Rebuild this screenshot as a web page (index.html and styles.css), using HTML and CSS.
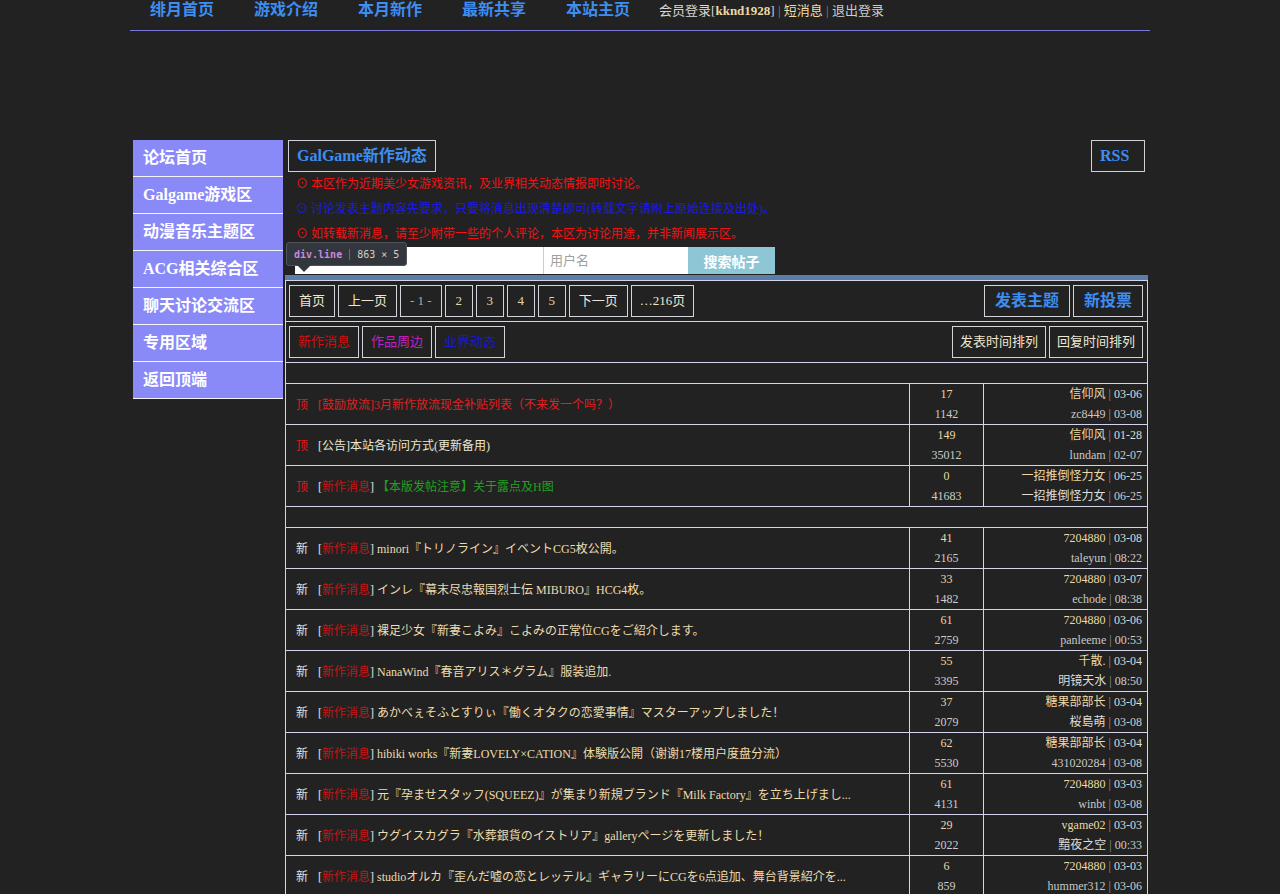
FILE: index.html
```html
<!DOCTYPE html>
<html lang="zh">
<head>
<meta charset="utf-8">
<title>GalGame新作动态</title>
<link rel="stylesheet" href="styles.css">
</head>
<body>
<div class="page">
  <div class="topnav">
    <a class="navlink">绯月首页</a>
    <a class="navlink">游戏介绍</a>
    <a class="navlink">本月新作</a>
    <a class="navlink">最新共享</a>
    <a class="navlink">本站主页</a>
    <span class="userinfo">会员登录[<b class="uname">kknd1928</b>] <span class="sep">|</span> <a class="pm">短消息</a> <span class="sep">|</span> <a class="logout">退出登录</a></span>
  </div>
  <div class="ad"></div>
  <div class="layout">
    <ul class="sidebar">
      <li>论坛首页</li>
      <li>Galgame游戏区</li>
      <li>动漫音乐主题区</li>
      <li>ACG相关综合区</li>
      <li>聊天讨论交流区</li>
      <li>专用区域</li>
      <li>返回顶端</li>
    </ul>
    <div class="main">
      <div class="board-head">
        <div class="board-title">GalGame新作动态</div>
        <div class="rss">RSS</div>
      </div>
      <div class="rules">
        <div class="rule red">⊙ 本区作为近期美少女游戏资讯，及业界相关动态情报即时讨论。</div>
        <div class="rule blue">⊙ 讨论发表主题内容先要求，只要将消息出现清楚即可(转载文字请附上原始连接及出处)。</div>
        <div class="rule red">⊙ 如转载新消息，请至少附带一些的个人评论，本区为讨论用途，并非新闻展示区。</div>
      </div>
      <div class="search">
        <input class="kw" type="text">
        <input class="user" type="text" placeholder="用户名">
        <button class="sbtn">搜索帖子</button>
      </div>
      <div class="line"></div>
      <div class="devtip"><span class="tag">div.line</span><span class="dim">863 × 5</span></div>

      <table class="threads">
        <colgroup><col class="c1"><col class="c2"><col class="c3"></colgroup>
        <tr class="bar">
          <td colspan="3">
            <div class="barrow">
              <div class="group">
                <a class="btn">首页</a><a class="btn">上一页</a><a class="btn cur">- 1 -</a><a class="btn num">2</a><a class="btn num">3</a><a class="btn num">4</a><a class="btn num">5</a><a class="btn">下一页</a><a class="btn last">…216页</a>
              </div>
              <div class="group">
                <a class="btn big">发表主题</a><a class="btn big">新投票</a>
              </div>
            </div>
          </td>
        </tr>
        <tr class="bar">
          <td colspan="3">
            <div class="barrow">
              <div class="group">
                <a class="btn cat red">新作消息</a><a class="btn cat magenta">作品周边</a><a class="btn cat blue">业界动态</a>
              </div>
              <div class="group">
                <a class="btn sort">发表时间排列</a><a class="btn sort">回复时间排列</a>
              </div>
            </div>
          </td>
        </tr>
        <tr class="spacer"><td colspan="3"></td></tr>

        <tr class="topic">
          <td class="t-title"><span class="mark top">顶</span><a class="tt hot">[鼓励放流]3月新作放流现金补贴列表（不来发一个吗？）</a></td>
          <td class="t-num"><div class="n1">17</div><div class="n2">1142</div></td>
          <td class="t-last"><div class="l1"><a>信仰风</a> <span class="sep">|</span> 03-06</div><div class="l2"><a>zc8449</a> <span class="sep">|</span> 03-08</div></td>
        </tr>
        <tr class="topic">
          <td class="t-title"><span class="mark top">顶</span><a class="tt white">[公告]本站各访问方式(更新备用)</a></td>
          <td class="t-num"><div class="n1">149</div><div class="n2">35012</div></td>
          <td class="t-last"><div class="l1"><a>信仰风</a> <span class="sep">|</span> 01-28</div><div class="l2"><a>lundam</a> <span class="sep">|</span> 02-07</div></td>
        </tr>
        <tr class="topic">
          <td class="t-title"><span class="mark top">顶</span><span class="br">[</span><a class="catlink">新作消息</a><span class="br">]</span> <a class="tt green">【本版发帖注意】关于露点及H图</a></td>
          <td class="t-num"><div class="n1">0</div><div class="n2">41683</div></td>
          <td class="t-last"><div class="l1"><a>一招推倒怪力女</a> <span class="sep">|</span> 06-25</div><div class="l2"><a class="w">一招推倒怪力女</a> <span class="sep">|</span> 06-25</div></td>
        </tr>
        <tr class="spacer"><td colspan="3"></td></tr>

        <tr class="topic">
          <td class="t-title"><span class="mark">新</span><span class="br">[</span><a class="catlink">新作消息</a><span class="br">]</span> <a class="tt">minori『トリノライン』イベントCG5枚公開。</a></td>
          <td class="t-num"><div class="n1">41</div><div class="n2">2165</div></td>
          <td class="t-last"><div class="l1"><a>7204880</a> <span class="sep">|</span> 03-08</div><div class="l2"><a>taleyun</a> <span class="sep">|</span> 08:22</div></td>
        </tr>
        <tr class="topic">
          <td class="t-title"><span class="mark">新</span><span class="br">[</span><a class="catlink">新作消息</a><span class="br">]</span> <a class="tt">インレ『幕末尽忠報国烈士伝 MIBURO』HCG4枚。</a></td>
          <td class="t-num"><div class="n1">33</div><div class="n2">1482</div></td>
          <td class="t-last"><div class="l1"><a>7204880</a> <span class="sep">|</span> 03-07</div><div class="l2"><a>echode</a> <span class="sep">|</span> 08:38</div></td>
        </tr>
        <tr class="topic">
          <td class="t-title"><span class="mark">新</span><span class="br">[</span><a class="catlink">新作消息</a><span class="br">]</span> <a class="tt">裸足少女『新妻こよみ』こよみの正常位CGをご紹介します。</a></td>
          <td class="t-num"><div class="n1">61</div><div class="n2">2759</div></td>
          <td class="t-last"><div class="l1"><a>7204880</a> <span class="sep">|</span> 03-06</div><div class="l2"><a>panleeme</a> <span class="sep">|</span> 00:53</div></td>
        </tr>
        <tr class="topic">
          <td class="t-title"><span class="mark">新</span><span class="br">[</span><a class="catlink">新作消息</a><span class="br">]</span> <a class="tt">NanaWind『春音アリス＊グラム』服装追加.</a></td>
          <td class="t-num"><div class="n1">55</div><div class="n2">3395</div></td>
          <td class="t-last"><div class="l1"><a>千散.</a> <span class="sep">|</span> 03-04</div><div class="l2"><a class="w">明镜天水</a> <span class="sep">|</span> 08:50</div></td>
        </tr>
        <tr class="topic">
          <td class="t-title"><span class="mark">新</span><span class="br">[</span><a class="catlink">新作消息</a><span class="br">]</span> <a class="tt">あかべぇそふとすりぃ『働くオタクの恋愛事情』マスターアップしました！</a></td>
          <td class="t-num"><div class="n1">37</div><div class="n2">2079</div></td>
          <td class="t-last"><div class="l1"><a>糖果部部长</a> <span class="sep">|</span> 03-04</div><div class="l2"><a class="w">桜島萌</a> <span class="sep">|</span> 03-08</div></td>
        </tr>
        <tr class="topic">
          <td class="t-title"><span class="mark">新</span><span class="br">[</span><a class="catlink">新作消息</a><span class="br">]</span> <a class="tt">hibiki works『新妻LOVELY×CATION』体験版公開（谢谢17楼用户度盘分流）</a></td>
          <td class="t-num"><div class="n1">62</div><div class="n2">5530</div></td>
          <td class="t-last"><div class="l1"><a>糖果部部长</a> <span class="sep">|</span> 03-04</div><div class="l2"><a>431020284</a> <span class="sep">|</span> 03-08</div></td>
        </tr>
        <tr class="topic">
          <td class="t-title"><span class="mark">新</span><span class="br">[</span><a class="catlink">新作消息</a><span class="br">]</span> <a class="tt">元『孕ませスタッフ(SQUEEZ)』が集まり新規ブランド『Milk Factory』を立ち上げまし...</a></td>
          <td class="t-num"><div class="n1">61</div><div class="n2">4131</div></td>
          <td class="t-last"><div class="l1"><a>7204880</a> <span class="sep">|</span> 03-03</div><div class="l2"><a>winbt</a> <span class="sep">|</span> 03-08</div></td>
        </tr>
        <tr class="topic">
          <td class="t-title"><span class="mark">新</span><span class="br">[</span><a class="catlink">新作消息</a><span class="br">]</span> <a class="tt">ウグイスカグラ『水葬銀貨のイストリア』galleryページを更新しました！</a></td>
          <td class="t-num"><div class="n1">29</div><div class="n2">2022</div></td>
          <td class="t-last"><div class="l1"><a>vgame02</a> <span class="sep">|</span> 03-03</div><div class="l2"><a class="w">黯夜之空</a> <span class="sep">|</span> 00:33</div></td>
        </tr>
        <tr class="topic">
          <td class="t-title"><span class="mark">新</span><span class="br">[</span><a class="catlink">新作消息</a><span class="br">]</span> <a class="tt">studioオルカ『歪んだ嘘の恋とレッテル』ギャラリーにCGを6点追加、舞台背景紹介を...</a></td>
          <td class="t-num"><div class="n1">6</div><div class="n2">859</div></td>
          <td class="t-last"><div class="l1"><a>7204880</a> <span class="sep">|</span> 03-03</div><div class="l2"><a>hummer312</a> <span class="sep">|</span> 03-06</div></td>
        </tr>
      </table>
    </div>
  </div>
</div>
</body>
</html>
```

FILE: styles.css
```css
* { box-sizing: border-box; }
html, body {
  margin: 0;
  padding: 0;
  background: #222222;
}
body {
  font-family: "Liberation Serif", "Noto Sans CJK SC", serif;
  font-size: 12px;
  color: #dddddd;
}
a { text-decoration: none; }

.page {
  width: 1020px;
  margin: 0 auto;
}

/* top nav */
.topnav {
  height: 31px;
  display: flex;
  align-items: baseline;
  padding-left: 20px;
  border-bottom: 1px solid #7a78d8;
}
.navlink {
  font-size: 16px;
  font-weight: bold;
  line-height: 20px;
  color: #3d8ef0;
  margin-right: 40px;
}
.navlink:nth-child(5) { margin-right: 29px; }
.userinfo {
  font-size: 13px;
  line-height: 18px;
  color: #d8d8d8;
}
.uname { color: #ecd8a4; }
.userinfo .sep { color: #888; }
.pm { color: #f0dca4; }
.logout { color: #cccccc; }

.ad { height: 109px; }

/* layout */
.layout {
  display: flex;
  gap: 2px;
  padding-left: 3px;
}
.sidebar {
  list-style: none;
  margin: 0;
  padding: 0;
  width: 150px;
  flex: none;
  align-self: flex-start;
}
.sidebar li {
  height: 37px;
  line-height: 36px;
  background: #8989f7;
  border-bottom: 1px solid #f4f4ff;
  color: #ffffff;
  font-size: 16px;
  font-weight: bold;
  padding-left: 10px;
}

.main {
  width: 863px;
  flex: none;
  position: relative;
}

.board-head {
  display: flex;
  justify-content: space-between;
  padding: 0 3px;
}
.board-title, .rss {
  height: 32px;
  line-height: 30px;
  border: 1px solid #d0d0d8;
  color: #3d8ef0;
  font-size: 16px;
  font-weight: bold;
  padding: 0 8px;
}
.rss { width: 54px; }

.rules {
  padding-left: 11px;
}
.rule {
  height: 25px;
  line-height: 25px;
  font-size: 12px;
}
.rule.red { color: #f01414; }
.rule.blue { color: #1a1ae6; }

.search {
  display: flex;
  height: 27px;
  margin-left: 10px;
  margin-bottom: 1px;
}
.search input {
  border: none;
  outline: none;
  background: #ffffff;
  height: 27px;
  margin: 0;
  padding: 0 6px;
  font-family: "Liberation Sans", "Noto Sans CJK SC", sans-serif;
  font-size: 13px;
}
.search .kw { width: 249px; border-right: 1px solid #cccccc; }
.search .user { width: 144px; }
.search .user::placeholder { color: #a0a0a0; }
.sbtn {
  width: 87px;
  height: 27px;
  border: none;
  margin: 0;
  background: #8ec6d6;
  color: #ffffff;
  font-family: "Liberation Serif", "Noto Sans CJK SC", serif;
  font-size: 14px;
  font-weight: bold;
}

.line {
  height: 5px;
  width: 863px;
  background: #5a7ea8;
}

.devtip {
  position: absolute;
  left: 1px;
  top: 102px;
  height: 24px;
  display: flex;
  align-items: center;
  background: #33363c;
  border: 1px solid #50535a;
  border-radius: 3px;
  padding: 0 7px;
  font-family: "DejaVu Sans Mono", monospace;
  font-size: 10px;
  white-space: nowrap;
}
.devtip::after {
  content: "";
  position: absolute;
  left: 10px;
  bottom: -7px;
  border-left: 7px solid transparent;
  border-right: 7px solid transparent;
  border-top: 7px solid #33363c;
}
.devtip .tag {
  color: #c889d6;
  font-weight: bold;
  padding-right: 7px;
  border-right: 1px solid #6a6d74;
}
.devtip .dim {
  color: #d0d0d0;
  padding-left: 7px;
}

/* table */
.threads {
  width: 862px;
  border-collapse: collapse;
  table-layout: fixed;
  background: #222222;
}
.threads td {
  border: 1px solid #d4d4ec;
  padding: 0;
}
.c1 { width: 624px; }
.c2 { width: 74px; }
.c3 { width: 164px; }

.bar td { height: 41px; padding: 3px 4px 3px 3px; }
.barrow {
  display: flex;
  justify-content: space-between;
  align-items: center;
}
.group { display: flex; gap: 3px; }
.btn {
  display: block;
  height: 32px;
  line-height: 30px;
  border: 1px solid #d4d4dc;
  padding: 0 9px;
  font-size: 13px;
  color: #eee6d0;
}
.btn.cur { color: #aaaaaa; }
.btn.last { padding: 0 8px; }
.btn.num { width: 28px; padding: 0; text-align: center; color: #e8d7aa; }
.btn.big {
  font-size: 16px;
  font-weight: bold;
  color: #3d8ef0;
  padding: 0 10px;
}
.btn.cat { padding: 0 8px; }
.btn.cat.red { color: #d01010; }
.btn.cat.magenta { color: #c020c0; }
.btn.cat.blue { color: #1a1ad0; }
.btn.sort { padding: 0 7px; }

.spacer td { height: 21px; }

.topic td { height: 41px; }
.t-title {
  padding-left: 10px !important;
  font-size: 12px;
  white-space: nowrap;
  overflow: hidden;
}
.mark {
  display: inline-block;
  width: 22px;
  color: #e0e0e0;
}
.mark.top { color: #e01a1a; }
.br { color: #e0e0e0; }
.catlink { color: #c81414; }
.tt { color: #ecdcae; }
.tt.hot { color: #e02020; }
.tt.white { color: #ece6d6; }
.tt.green { color: #22a022; }

.t-num {
  text-align: center;
  font-size: 12px;
  line-height: 20px;
}
.n1 { color: #ecd8a0; }
.n2 { color: #cccccc; }

.t-last {
  text-align: right;
  padding-right: 5px !important;
  font-size: 12px;
  line-height: 20px;
  white-space: nowrap;
}
.l1 { color: #dddddd; }
.l1 a { color: #ecd8a4; }
.l2 { color: #cccccc; }
.l2 a { color: #c8c8c8; }
.l2 a.w { color: #dddddd; }
.t-last .sep { color: #999999; }
```
